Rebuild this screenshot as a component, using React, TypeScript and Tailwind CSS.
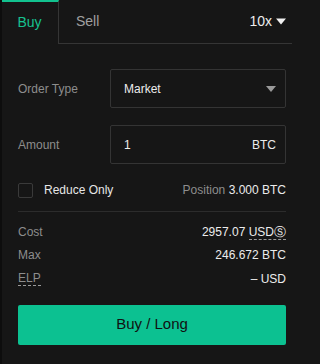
import { useState } from "react";

const font = { fontFamily: '"Liberation Sans", Arial, sans-serif' };

export default function App() {
  const [side, setSide] = useState<"buy" | "sell">("buy");
  const [reduceOnly, setReduceOnly] = useState(false);

  return (
    <div className="w-full min-h-[364px] bg-[#161616]">
      <div style={font} className="w-[292px] h-[364px] bg-[#161616] border-l-[2px] border-[#0d0d0d] text-[12px] text-[#e8e8e8] flex flex-col">
        {/* Tabs */}
        <div className="flex h-[44px]">
          <button
            onClick={() => setSide("buy")}
            className="w-[57px] h-[44px] border-t-[2px] border-r border-t-[#12c28f] border-r-[#353535] text-[14px] text-[#17c290] pr-[1px] pb-[2px]"
          >
            Buy
          </button>
          <div className="flex-1 flex items-center justify-between border-b border-[#353535] pl-[17px] pr-[6px] pb-[1px]">
            <button onClick={() => setSide("sell")} className="text-[14px] text-[#a0a0a0]">
              Sell
            </button>
            <div className="flex items-center gap-[4px] text-[14px] text-[#ececec]">
              <span>10x</span>
              <svg width="10" height="7" viewBox="0 0 10 7">
                <path d="M0 0.5h10L5 6.5z" fill="#f0f0f0" />
              </svg>
            </div>
          </div>
        </div>

        <div className="pl-[16px] pr-[6px] flex flex-col">
          {/* Order type */}
          <div className="flex items-center mt-[25px]">
            <span className="w-[92px] text-[#8d8d8d]">Order Type</span>
            <div className="flex-1 h-[39px] border border-[#343434] rounded-[2px] flex items-center justify-between pl-[13px] pr-[9px]">
              <span className="text-[#ececec]">Market</span>
              <svg width="10" height="6" viewBox="0 0 10 6">
                <path d="M0 0h10L5 6z" fill="#9a9a9a" />
              </svg>
            </div>
          </div>

          {/* Amount */}
          <div className="flex items-center mt-[17px]">
            <span className="w-[92px] text-[#8d8d8d]">Amount</span>
            <div className="flex-1 h-[39px] border border-[#343434] rounded-[2px] flex items-center justify-between pl-[13px] pr-[9px]">
              <span className="text-[#ececec]">1</span>
              <span className="text-[#ececec]">BTC</span>
            </div>
          </div>

          {/* Reduce only */}
          <div className="flex items-center justify-between mt-[19px] h-[14px]">
            <label className="flex items-center gap-[11px] cursor-pointer" onClick={() => setReduceOnly(!reduceOnly)}>
              <span className="w-[15px] h-[15px] border border-[#3a3a3a] rounded-[2px]" />
              <span className="text-[#e6e6e6]">Reduce Only</span>
            </label>
            <span>
              <span className="text-[#8d8d8d]">Position </span>
              <span className="text-[#ececec]">3.000 BTC</span>
            </span>
          </div>

          <div className="h-px bg-[#2c2c2c] mt-[14px]" />

          {/* Summary */}
          <div className="flex flex-col mt-[8px]">
            <div className="flex items-center justify-between h-[23.5px]">
              <span className="text-[#8d8d8d]">Cost</span>
              <span className="text-[#ececec]">
                2957.07{" "}
                <span className="border-b border-dashed border-[#9a9a9a]">USDⓈ</span>
              </span>
            </div>
            <div className="flex items-center justify-between h-[23.5px]">
              <span className="text-[#8d8d8d]">Max</span>
              <span className="text-[#ececec]">246.672 BTC</span>
            </div>
            <div className="flex items-center justify-between h-[23.5px]">
              <span className="text-[#8d8d8d] border-b border-dashed border-[#9a9a9a] leading-[14px]">ELP</span>
              <span className="text-[#ececec]">– USD</span>
            </div>
          </div>

          <button className="mt-[14px] h-[40px] rounded-[2px] bg-[#0cc191] text-[15px] text-[#111] font-medium">
            {side === "buy" ? "Buy / Long" : "Sell / Short"}
          </button>
        </div>
      </div>
    </div>
  );
}
